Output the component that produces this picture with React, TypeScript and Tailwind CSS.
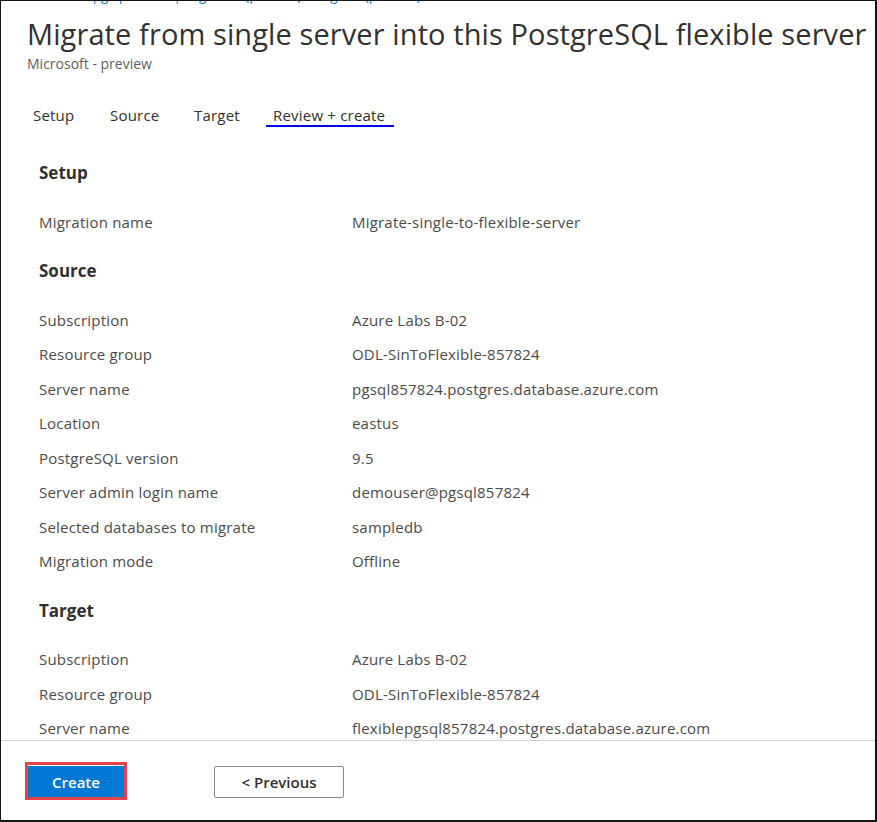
const font = { fontFamily: '"Open Sans", "Noto Sans", sans-serif' };

type Row = [string, string];

const sections: { title: string; rows: Row[] }[] = [
  {
    title: 'Setup',
    rows: [['Migration name', 'Migrate-single-to-flexible-server']],
  },
  {
    title: 'Source',
    rows: [
      ['Subscription', 'Azure Labs B-02'],
      ['Resource group', 'ODL-SinToFlexible-857824'],
      ['Server name', 'pgsql857824.postgres.database.azure.com'],
      ['Location', 'eastus'],
      ['PostgreSQL version', '9.5'],
      ['Server admin login name', 'demouser@pgsql857824'],
      ['Selected databases to migrate', 'sampledb'],
      ['Migration mode', 'Offline'],
    ],
  },
  {
    title: 'Target',
    rows: [
      ['Subscription', 'Azure Labs B-02'],
      ['Resource group', 'ODL-SinToFlexible-857824'],
      ['Server name', 'flexiblepgsql857824.postgres.database.azure.com'],
      ['Location', 'eastus'],
    ],
  },
];

const tabs = [
  { label: 'Setup', w: 'w-[77px]' },
  { label: 'Source', w: 'w-[84px]' },
  { label: 'Target', w: 'w-[79px]' },
  { label: 'Review + create', w: 'w-[128px]', active: true },
];

export default function App() {
  return (
    <div
      className="w-[877px] h-[822px] bg-white border-l border-t border-r-2 border-b-2 border-[#141414] flex flex-col overflow-hidden text-[#323130]"
      style={font}
    >
      {/* breadcrumb, scrolled out of view */}
      <div className="h-[5px] overflow-hidden shrink-0">
        <div className="-mt-[13px] pl-[92px] text-[13px] leading-[16px] text-[#0078d4] whitespace-nowrap">
          pgsql857824 | Migration (preview) &gt; Migrate (preview)
        </div>
      </div>

      <div className="pl-[26px] shrink-0">
        <h1 className="text-[29px] leading-[36px] mt-[10px] tracking-[0.1px] whitespace-nowrap">
          Migrate from single server into this PostgreSQL flexible server
        </h1>
        <div className="text-[14px] leading-[20px] text-[#605e5c] mt-[2px]">Microsoft - preview</div>
      </div>

      <div className="flex pl-[25px] mt-[27px] shrink-0">
        {tabs.map((t) => (
          <div key={t.label} className={`${t.w} h-[26px] relative`}>
            <span className="absolute left-[7px] top-[4px] text-[15px] leading-[20px] tracking-[0.2px] whitespace-nowrap">
              {t.label}
            </span>
            {t.active && <div className="absolute left-0 right-0 bottom-0 h-[2px] bg-[#0000e8]" />}
          </div>
        ))}
      </div>

      <div className="flex-1 overflow-hidden pl-[38px] pt-[14px]">
        {sections.map((s) => (
          <div key={s.title}>
            <div className="h-[63.5px] flex items-center text-[17px] font-bold">{s.title}</div>
            {s.rows.map(([k, v], i) => (
              <div
                key={k + i}
                className="h-[34.5px] flex items-center text-[15px] tracking-[0.2px] text-[#4b4b4b]"
              >
                <div className="w-[313px] shrink-0 whitespace-nowrap">{k}</div>
                <div className="whitespace-nowrap">{v}</div>
              </div>
            ))}
          </div>
        ))}
      </div>

      <div className="h-[80px] shrink-0 border-t border-[#d2d2d2] flex items-start pt-[21px] pl-[24px]">
        <div className="border-[3px] border-[#e8434a]">
          <button className="block w-[96px] h-[32px] bg-[#0078d4] border-t border-white text-white text-[15px] leading-[20px] font-semibold">
            Create
          </button>
        </div>
        <button className="block ml-[87px] mt-[4px] w-[130px] h-[32px] border border-[#8a8886] rounded-[2px] text-[15px] leading-[20px] font-semibold text-[#323130]">
          &lt; Previous
        </button>
      </div>
    </div>
  );
}
